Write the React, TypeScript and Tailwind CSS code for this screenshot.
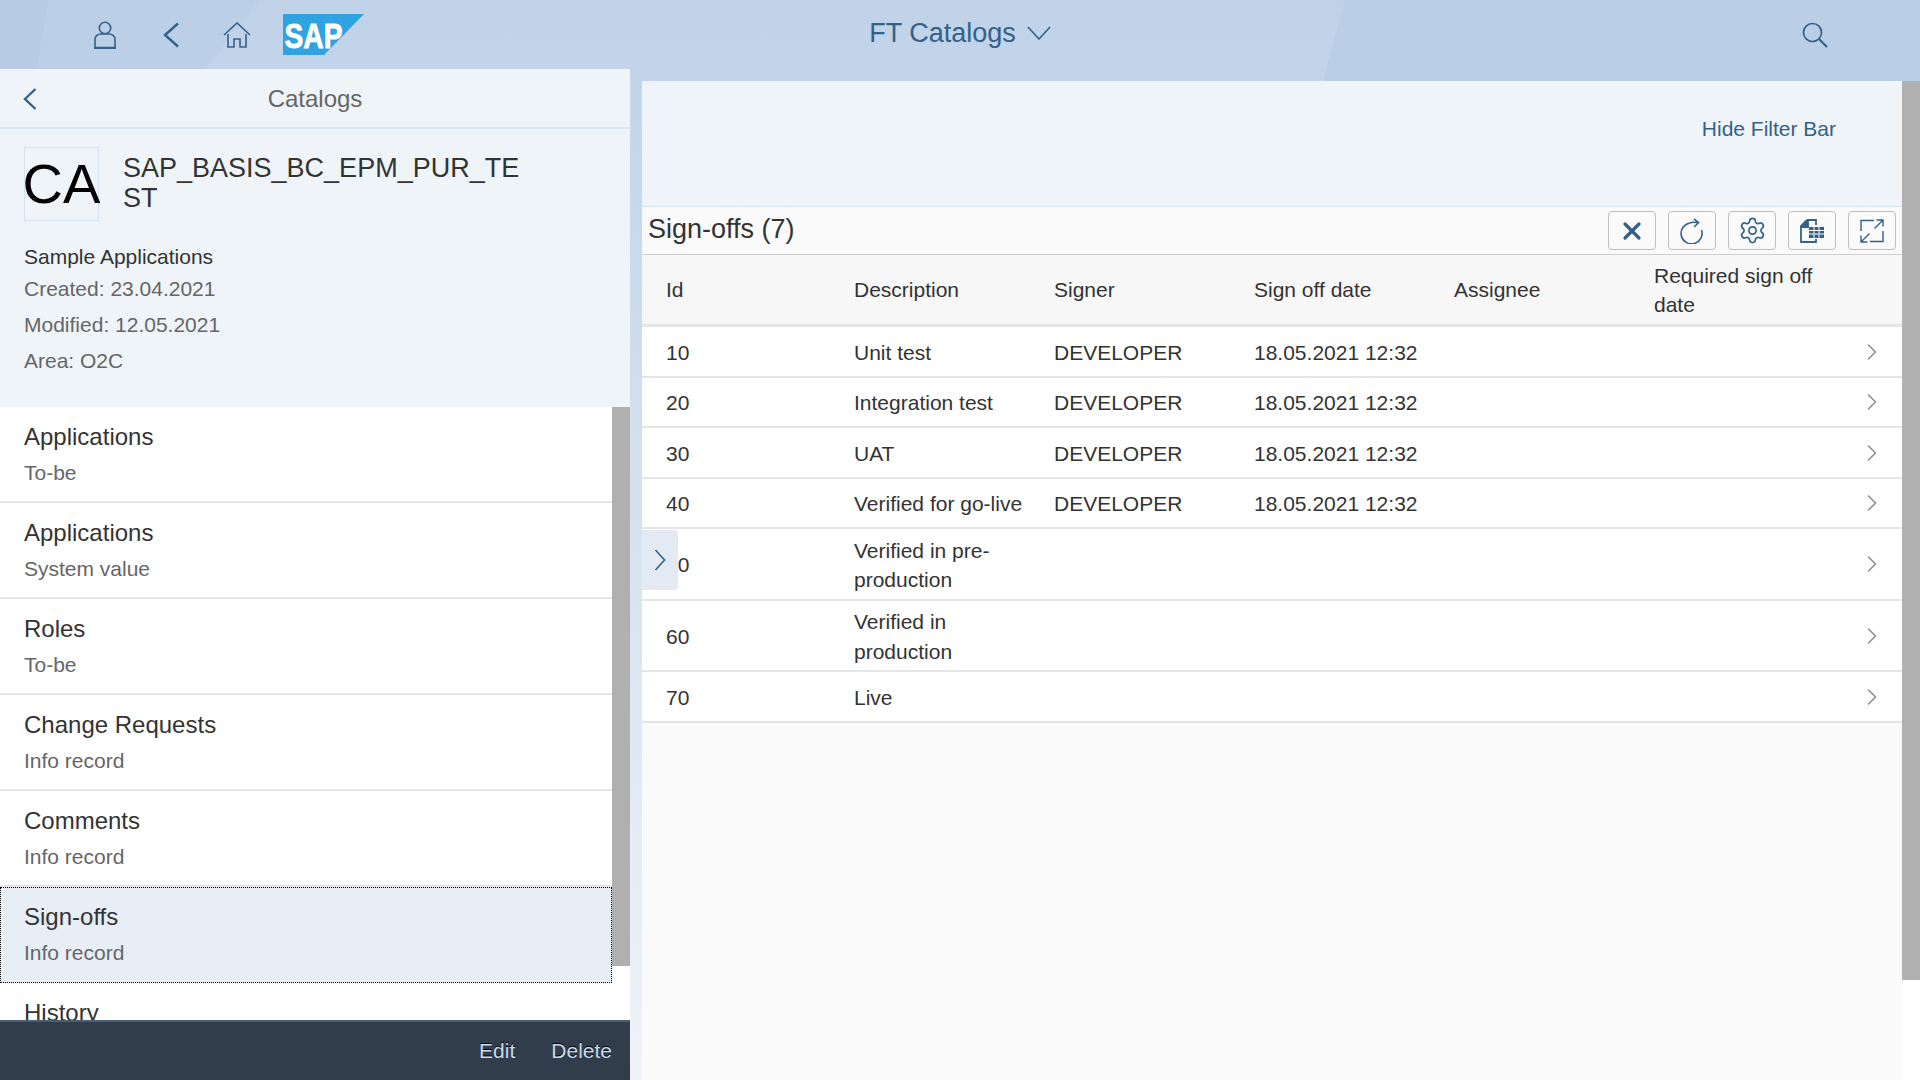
import { ChevronRight, Settings, X } from 'lucide-react';

const sans = 'font-["Liberation_Sans",Arial,sans-serif]';

const listItems = [
  { title: 'Applications', sub: 'To-be', h: 'h-[96px]' },
  { title: 'Applications', sub: 'System value', h: 'h-[96px]' },
  { title: 'Roles', sub: 'To-be', h: 'h-[96px]' },
  { title: 'Change Requests', sub: 'Info record', h: 'h-[96px]' },
  { title: 'Comments', sub: 'Info record', h: 'h-[96px]' },
  { title: 'Sign-offs', sub: 'Info record', h: 'h-[96px]', selected: true },
];

const rows = [
  { id: '10', desc: 'Unit test', signer: 'DEVELOPER', date: '18.05.2021 12:32', h: 'h-[51px]' },
  { id: '20', desc: 'Integration test', signer: 'DEVELOPER', date: '18.05.2021 12:32', h: 'h-[50px]' },
  { id: '30', desc: 'UAT', signer: 'DEVELOPER', date: '18.05.2021 12:32', h: 'h-[51px]' },
  { id: '40', desc: 'Verified for go-live', signer: 'DEVELOPER', date: '18.05.2021 12:32', h: 'h-[50px]' },
  { id: '50', desc: 'Verified in pre-production', signer: '', date: '', h: 'h-[72px]' },
  { id: '60', desc: 'Verified in production', signer: '', date: '', h: 'h-[71px]' },
  { id: '70', desc: 'Live', signer: '', date: '', h: 'h-[51px]' },
];

const cols = 'grid grid-cols-[194px_200px_200px_200px_200px_200px_66px] items-center';

function ShellDecor() {
  return (
    <svg className="absolute left-0 top-0 h-[81px] w-[1920px]" viewBox="0 0 1920 81" aria-hidden="true">
      <polygon points="0,0 49,0 35,81 0,81" fill="#b7cce4" />
      <polygon points="49,0 259,0 196,81 35,81" fill="#bbcfe6" />
      <polygon points="1345,0 1920,0 1920,81 1323,81" fill="#bacee6" />
    </svg>
  );
}

function SapLogo() {
  return (
    <svg width="81" height="41" viewBox="0 0 81 41" aria-label="SAP">
      <polygon points="0,0 81,0 41,41 0,41" fill="#2fa3e2" />
      <text
        x="1.5"
        y="33.5"
        fontFamily="'Liberation Sans', Arial, sans-serif"
        fontWeight="700"
        fontSize="35"
        fill="#fff"
        stroke="#fff"
        strokeWidth="0.9"
        textLength="58"
        lengthAdjust="spacingAndGlyphs"
      >
        SAP
      </text>
    </svg>
  );
}

function ShellHeader() {
  const c = '#346187';
  return (
    <header className="relative grid h-[69px] grid-cols-[1fr_auto_1fr] items-center">
      <div className="flex items-center pl-[93px]">
        <svg width="24" height="28" viewBox="0 0 24 28" fill="none" stroke={c} strokeWidth="1.6">
          <circle cx="12" cy="7" r="5.7" />
          <path d="M2 26.5V18.5C2 15 5 13 8 13H16C19 13 22 15 22 18.5V26.5Z" />
          <path d="M1 27H23" strokeWidth="2" />
        </svg>
        <svg className="ml-[45px]" width="18" height="26" viewBox="0 0 18 26" fill="none" stroke={c} strokeWidth="2.4">
          <path d="M16 1.5 3 13 16 24.5" />
        </svg>
        <svg className="ml-[43px]" width="28" height="26" viewBox="0 0 28 26" fill="none" stroke={c} strokeWidth="1.6">
          <path d="M1 13 14 1 27 13" />
          <path d="M5 12V25H11V17H17V25H23V12" />
        </svg>
        <div className="ml-[32px]">
          <SapLogo />
        </div>
      </div>
      <div className="flex items-center gap-[11px] pb-[3px] text-[27px] leading-none text-[#346187]">
        <span>FT Catalogs</span>
        <svg width="24" height="14" viewBox="0 0 24 14" fill="none" stroke={c} strokeWidth="1.6">
          <path d="M1 1 12 13 23 1" />
        </svg>
      </div>
      <div className="flex justify-end pr-[92px]">
        <svg width="26" height="26" viewBox="0 0 26 26" fill="none" stroke={c} strokeWidth="1.7">
          <circle cx="10.5" cy="10.5" r="9" />
          <path d="M17 17 25 25" strokeWidth="2.2" />
        </svg>
      </div>
    </header>
  );
}

function MasterPanel() {
  return (
    <aside className="flex h-[1011px] w-[630px] shrink-0 flex-col bg-white">
      <div className="flex h-[60px] shrink-0 items-center border-b-2 border-[#dbe5f0] bg-[#eff4f9]">
        <svg className="ml-[23px] mt-[2px]" width="14" height="22" viewBox="0 0 14 22" fill="none" stroke="#346187" strokeWidth="2.4">
          <path d="M12.5 1 2 11 12.5 21" />
        </svg>
        <span className="ml-[1px] mt-[2px] flex-1 text-center text-[24px] text-[#666]">Catalogs</span>
        <span className="w-[38px]" />
      </div>

      <div className="h-[278px] shrink-0 bg-[#eff4f9] pl-[24px] pt-[18px]">
        <div className="flex">
          <div className="flex h-[74px] w-[75px] items-center justify-center whitespace-nowrap border border-[#d5e2f0] text-[56px] leading-none text-black">
            CA
          </div>
          <div className="ml-[24px] w-[410px] break-all pt-[6px] text-[27px] leading-[30px] text-[#333]">
            SAP_BASIS_BC_EPM_PUR_TE ST
          </div>
        </div>
        <div className="mt-[24px] text-[21px] leading-[24px] text-[#333]">Sample Applications</div>
        <div className="mt-[8px] text-[21px] leading-[24px] text-[#666]">Created: 23.04.2021</div>
        <div className="mt-[12px] text-[21px] leading-[24px] text-[#666]">Modified: 12.05.2021</div>
        <div className="mt-[12px] text-[21px] leading-[24px] text-[#666]">Area: O2C</div>
      </div>

      <div className="flex h-[613px] overflow-hidden">
        <ul className="w-[612px]">
          {listItems.map((item) => (
            <li
              key={item.title + item.sub}
              className={
                item.selected
                  ? `${item.h} border border-dotted border-black bg-[#e7eef6] pl-[23px] pt-[15px]`
                  : `${item.h} border-b-2 border-[#e5e5e5] pl-[24px] pt-[16px]`
              }
            >
              <div className="text-[24px] leading-[28px] text-[#333]">{item.title}</div>
              <div className="mt-[10px] text-[21px] leading-[24px] text-[#666]">{item.sub}</div>
            </li>
          ))}
          <li className="pl-[24px] pt-[16px] text-[24px] leading-[28px] text-[#333]">History</li>
        </ul>
        <div className="w-[18px]">
          <div className="h-[559px] bg-[#b0b0b0]" />
        </div>
      </div>

      <div className="absolute bottom-0 left-0 flex h-[60px] w-[630px] items-center justify-end gap-[36px] border-t-2 border-[#4b5d70] bg-[#313d4a] pr-[18px] text-[21px] text-[#c9dcf0] [text-shadow:0_-1px_0_#000]">
        <span>Edit</span>
        <span>Delete</span>
      </div>
    </aside>
  );
}

function RefreshIcon() {
  return (
    <svg width="24" height="26" viewBox="0 0 24 26" fill="none" stroke="#346187" strokeWidth="1.6">
      <path d="M9 5.2A10.5 10.5 0 1 0 21.5 12" />
      <path d="M9 5.2C12 4 15 4 17.5 4.5" />
      <path d="M14 0.8 18.5 4.6 14.2 9" />
    </svg>
  );
}

function TableIcon() {
  return (
    <svg width="24" height="24" viewBox="0 0 24 24" fill="none" stroke="#346187" strokeWidth="1.8">
      <path d="M7 1H16V6M7 1 1 7V23H16V20" />
      <path d="M1 8H8V1Z" fill="#346187" />
      <rect x="9" y="8" width="15" height="11" fill="#346187" stroke="none" />
      <path d="M9 11.5H24M9 15H24M14 8V19M19 8V19" stroke="#fafafa" strokeWidth="1" />
    </svg>
  );
}

function FullscreenIcon() {
  return (
    <svg width="24" height="24" viewBox="0 0 24 24" fill="none" stroke="#346187" strokeWidth="1.4">
      <path d="M1 12V1.5H14" />
      <path d="M23 12V22.5H10" />
      <path d="M14.5 9.5 22.5 1.5M16.5 1H23V7.5" />
      <path d="M9.5 14.5 1.5 22.5M1 16.5V23H7.5" />
    </svg>
  );
}

function ToolButton({ children }: { children: React.ReactNode }) {
  return (
    <button className="flex h-[39px] w-[48px] items-center justify-center rounded-[4px] border border-[#bfbfbf] bg-[#fafafa]">
      {children}
    </button>
  );
}

function DetailPanel() {
  return (
    <main className="ml-[12px] mt-[12px] flex h-[999px] w-[1278px] bg-white">
      <div className="relative flex h-full w-[1260px] flex-col bg-[#fafafa]">
        <div className="flex h-[125px] shrink-0 justify-end bg-[#eff4f9] pr-[66px] pt-[36px]">
          <span className="text-[21px] leading-[24px] text-[#346187]">Hide Filter Bar</span>
        </div>

        <div className="flex h-[49px] shrink-0 items-center gap-[12px] border-y border-b-[#cfcfcf] border-t-[#d3e2f3] pl-[6px] pr-[6px]">
          <span className="mb-[2px] flex-1 text-[27px] leading-none text-[#333]">Sign-offs (7)</span>
          <ToolButton>
            <X size={28} strokeWidth={2.8} color="#346187" />
          </ToolButton>
          <ToolButton>
            <RefreshIcon />
          </ToolButton>
          <ToolButton>
            <Settings size={29} strokeWidth={1.4} color="#346187" />
          </ToolButton>
          <ToolButton>
            <TableIcon />
          </ToolButton>
          <ToolButton>
            <FullscreenIcon />
          </ToolButton>
        </div>

        <div className={`${cols} h-[72px] shrink-0 border-b-[3px] border-[#e5e5e5] bg-[#f7f7f7] text-[21px] leading-[29px] text-[#333]`}>
          <div className="pl-[24px]">Id</div>
          <div className="pl-[18px] pr-[18px]">Description</div>
          <div className="pl-[18px] pr-[18px]">Signer</div>
          <div className="pl-[18px] pr-[18px]">Sign off date</div>
          <div className="pl-[18px] pr-[18px]">Assignee</div>
          <div className="pl-[18px] pr-[18px]">Required sign off date</div>
          <div />
        </div>

        <div className="shrink-0 bg-white text-[21px] leading-[29.4px] text-[#333]">
          {rows.map((r) => (
            <div key={r.id} className={`${cols} ${r.h} border-b-2 border-[#e5e5e5]`}>
              <div className="pl-[24px] pt-[2px]">{r.id}</div>
              <div className="pl-[18px] pr-[8px] pt-[2px]">{r.desc}</div>
              <div className="pl-[18px] pr-[18px] pt-[2px]">{r.signer}</div>
              <div className="whitespace-nowrap pl-[18px] pt-[2px]">{r.date}</div>
              <div />
              <div />
              <div className="flex justify-end pr-[16px]">
                <ChevronRight size={28} strokeWidth={1.3} color="#8c8c8c" />
              </div>
            </div>
          ))}
        </div>

        {/* collapse handle sits over the Id column */}
        <button className="absolute left-0 top-[449px] flex h-[60px] w-[36px] items-center justify-center rounded-r-[4px] bg-[#e3eaf4]">
          <svg width="12" height="22" viewBox="0 0 12 22" fill="none" stroke="#346187" strokeWidth="1.6">
            <path d="M1.5 1 10.5 11 1.5 21" />
          </svg>
        </button>
      </div>
      <div className="w-[18px]">
        <div className="h-[899px] bg-[#b0b0b0]" />
      </div>
    </main>
  );
}

export default function App() {
  return (
    <div className={`relative h-[1080px] w-[1920px] overflow-hidden bg-linear-to-b from-[#bfd2e8] to-[#eff3f8] ${sans}`}>
      <ShellDecor />
      <ShellHeader />
      <div className="relative flex">
        <MasterPanel />
        <DetailPanel />
      </div>
    </div>
  );
}
